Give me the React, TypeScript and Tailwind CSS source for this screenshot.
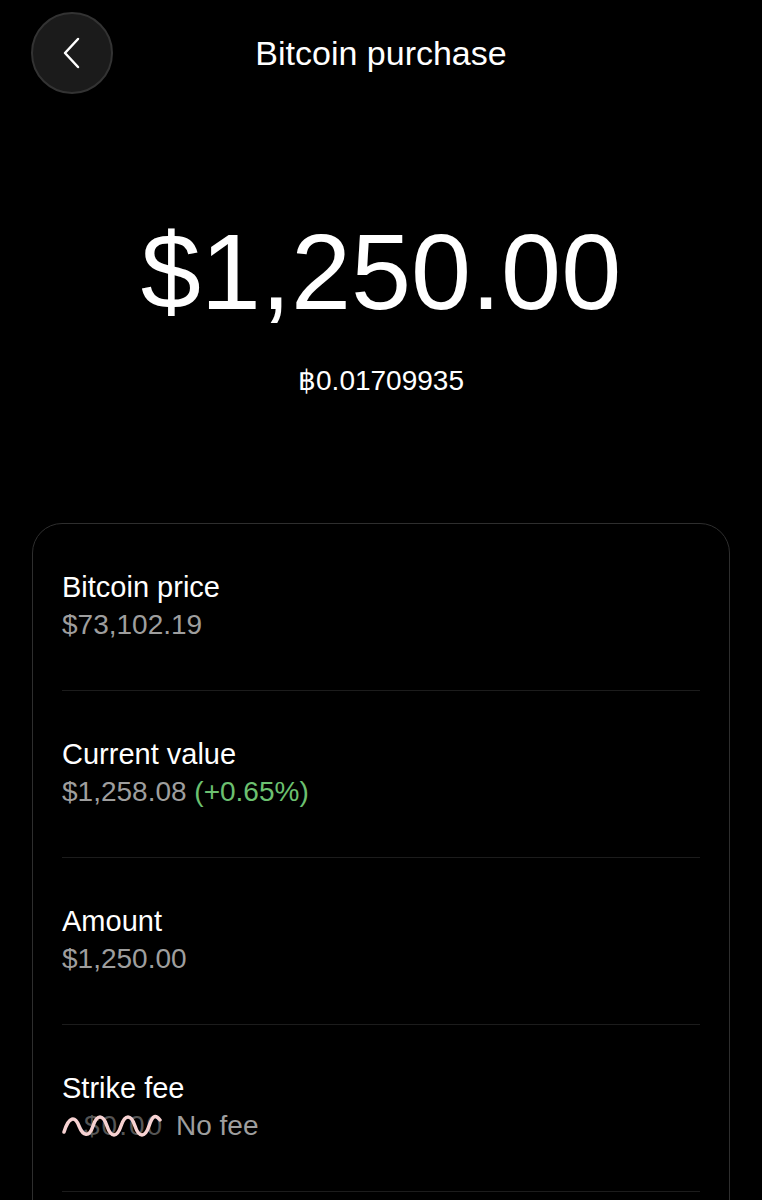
export default function App() {
  const rows = [
    { label: "Bitcoin price", value: <span>$73,102.19</span> },
    {
      label: "Current value",
      value: (
        <span>
          $1,258.08 <span className="text-[#6cc070]">(+0.65%)</span>
        </span>
      ),
    },
    { label: "Amount", value: <span>$1,250.00</span> },
    {
      label: "Strike fee",
      value: (
        <span className="flex items-center gap-[14px]">
          <span className="relative inline-block w-[100px] pl-[22px] text-left tracking-[2px] text-[#555555]">
            $0.00
            <svg
              className="absolute left-0 top-1/2 -translate-y-1/2"
              width="100"
              height="28"
              viewBox="0 0 100 28"
              fill="none"
            >
              <path
                d="M2 20 C 7 4, 13 4, 17 14 S 27 26, 31 14 S 41 2, 45 14 S 55 26, 59 14 S 69 2, 73 14 S 83 26, 87 14 S 94 3, 98 8"
                stroke="#f7d2d2"
                strokeWidth="3.5"
                strokeLinecap="round"
              />
            </svg>
          </span>
          <span>No fee</span>
        </span>
      ),
    },
  ];

  return (
    <div className="min-h-[1200px] bg-black text-white font-['Liberation_Sans',Arial,sans-serif] overflow-hidden">
      <header className="grid grid-cols-[82px_1fr_82px] items-center px-[31px] pt-3">
        <button className="flex h-[82px] w-[82px] items-center justify-center rounded-full border-2 border-[#333333] bg-[#1b1b1b]">
          <svg width="20" height="32" viewBox="0 0 20 32" fill="none">
            <path d="M16 2 L3 16 L16 30" stroke="white" strokeWidth="2.5" strokeLinecap="round" strokeLinejoin="round" />
          </svg>
        </button>
        <h1 className="text-center text-[34px] leading-none">Bitcoin purchase</h1>
        <div />
      </header>

      <div className="mt-[124px] text-center text-[108px] leading-none">$1,250.00</div>
      <div className="mt-[39px] text-center text-[28px] leading-[32px]">฿0.01709935</div>

      <section className="mx-[32px] mt-[126px] rounded-[30px] border border-[#2e2e2e] px-[29px]">
        {rows.map((r) => (
          <div key={r.label} className="border-b border-[#1c1c1c] pt-[44px] pb-[46px] leading-[38px]">
            <div className="text-[29px]">{r.label}</div>
            <div className="text-[28px] text-[#9e9e9e]">{r.value}</div>
          </div>
        ))}
        <div className="h-[200px]" />
      </section>
    </div>
  );
}
